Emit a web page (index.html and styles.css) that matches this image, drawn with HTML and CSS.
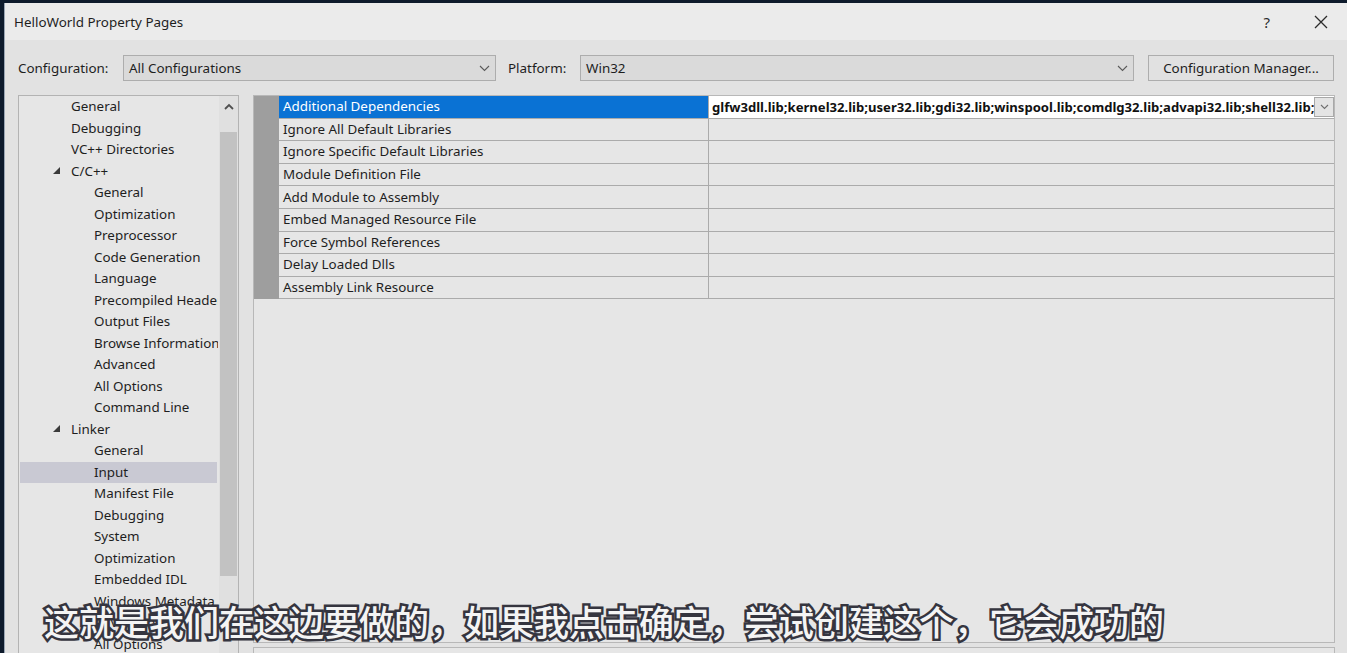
FILE: index.html
```html
<!DOCTYPE html>
<html>
<head>
<meta charset="utf-8">
<link rel="stylesheet" href="styles.css">
</head>
<body>
<div class="screen">
  <div class="window">
    <div class="titlebar">
      <span class="title">HelloWorld Property Pages</span>
      <div class="tb-buttons">
        <span class="help">?</span>
        <svg class="close" width="14" height="14" viewBox="0 0 14 14"><path d="M1 1L13 13M13 1L1 13" stroke="#2b2b2b" stroke-width="1.3" fill="none"/></svg>
      </div>
    </div>
    <div class="content">
      <div class="config-row">
        <span class="lbl lbl-config">Configuration:</span>
        <div class="combo combo-config"><span class="combo-text">All Configurations</span><svg class="chev" width="11" height="7" viewBox="0 0 11 7"><path d="M1 1L5.5 5.5L10 1" stroke="#5a5a5a" stroke-width="1.1" fill="none"/></svg></div>
        <span class="lbl lbl-platform">Platform:</span>
        <div class="combo combo-platform"><span class="combo-text">Win32</span><svg class="chev" width="11" height="7" viewBox="0 0 11 7"><path d="M1 1L5.5 5.5L10 1" stroke="#5a5a5a" stroke-width="1.1" fill="none"/></svg></div>
        <div class="btn">Configuration Manager...</div>
      </div>
      <div class="main">
        <div class="tree">
          <div class="tree-list">
            <div class="item l1"><span class="twisty"></span>General</div>
            <div class="item l1"><span class="twisty"></span>Debugging</div>
            <div class="item l1"><span class="twisty"></span>VC++ Directories</div>
            <div class="item l1"><span class="twisty"><svg width="7" height="7" viewBox="0 0 7 7"><path d="M7 0L7 7L0 7Z" fill="#3a3a3a"/></svg></span>C/C++</div>
            <div class="item l2">General</div>
            <div class="item l2">Optimization</div>
            <div class="item l2">Preprocessor</div>
            <div class="item l2">Code Generation</div>
            <div class="item l2">Language</div>
            <div class="item l2">Precompiled Headers</div>
            <div class="item l2">Output Files</div>
            <div class="item l2">Browse Information</div>
            <div class="item l2">Advanced</div>
            <div class="item l2">All Options</div>
            <div class="item l2">Command Line</div>
            <div class="item l1"><span class="twisty"><svg width="7" height="7" viewBox="0 0 7 7"><path d="M7 0L7 7L0 7Z" fill="#3a3a3a"/></svg></span>Linker</div>
            <div class="item l2">General</div>
            <div class="item l2 selected">Input</div>
            <div class="item l2">Manifest File</div>
            <div class="item l2">Debugging</div>
            <div class="item l2">System</div>
            <div class="item l2">Optimization</div>
            <div class="item l2">Embedded IDL</div>
            <div class="item l2">Windows Metadata</div>
            <div class="item l2">Advanced</div>
            <div class="item l2">All Options</div>
          </div>
          <div class="scrollbar">
            <div class="sb-up"><svg width="10" height="7" viewBox="0 0 10 7"><path d="M1 6L5 2L9 6" stroke="#505050" stroke-width="1.8" fill="none"/></svg></div>
            <div class="sb-thumb"></div>
          </div>
        </div>
        <div class="right">
          <div class="grid-panel">
            <div class="grid">
              <div class="gutter"></div>
              <div class="rows">
                <div class="row selected"><div class="name">Additional Dependencies</div><div class="value"><span class="value-text">glfw3dll.lib;kernel32.lib;user32.lib;gdi32.lib;winspool.lib;comdlg32.lib;advapi32.lib;shell32.lib;ole32.lib;oleaut32.lib;uuid.lib;odbc32.lib;odbccp32.lib;%(AdditionalDependencies)</span><div class="dd"><svg width="9" height="6" viewBox="0 0 9 6"><path d="M1 1L4.5 4.5L8 1" stroke="#707070" stroke-width="1.1" fill="none"/></svg></div></div></div>
                <div class="row"><div class="name">Ignore All Default Libraries</div><div class="value"></div></div>
                <div class="row"><div class="name">Ignore Specific Default Libraries</div><div class="value"></div></div>
                <div class="row"><div class="name">Module Definition File</div><div class="value"></div></div>
                <div class="row"><div class="name">Add Module to Assembly</div><div class="value"></div></div>
                <div class="row"><div class="name">Embed Managed Resource File</div><div class="value"></div></div>
                <div class="row"><div class="name">Force Symbol References</div><div class="value"></div></div>
                <div class="row"><div class="name">Delay Loaded Dlls</div><div class="value"></div></div>
                <div class="row"><div class="name">Assembly Link Resource</div><div class="value"></div></div>
              </div>
            </div>
          </div>
          <div class="desc-panel"></div>
        </div>
      </div>
    </div>
  </div>
  <div class="subtitle">这就是我们在这边要做的，如果我点击确定，尝试创建这个，它会成功的</div>
</div>
</body>
</html>
```
FILE: styles.css
```css
* { box-sizing: border-box; }
html, body { margin: 0; padding: 0; }
body {
  background: #0e1b2c;
  width: 1347px;
  height: 653px;
  overflow: hidden;
  font-family: "Noto Sans", "Open Sans", sans-serif;
  font-size: 13.4px;
  color: #1e1e1e;
}
.screen { position: relative; width: 1347px; height: 653px; overflow: hidden; }
.window {
  margin: 3px 0 0 4px;
  height: 650px;
  background: #e2e2e2;
  border-left: 1px solid #9aa6b4;
}
.titlebar {
  height: 37px;
  background: #ebebeb;
  display: flex;
  align-items: center;
  padding-left: 9px;
}
.title { flex: 1; }
.tb-buttons { display: flex; align-items: center; }
.help { font-size: 15px; color: #2b2b2b; margin-right: 44px; }
.close { margin-right: 19px; }
.content { padding: 15px 12px 0 13px; }
.config-row { display: flex; align-items: center; height: 26px; }
.lbl { white-space: nowrap; }
.lbl-config { width: 105px; }
.lbl-platform { width: 72px; margin-left: 12px; }
.combo {
  height: 26px;
  background: #dadada;
  border: 1px solid #adadad;
  display: flex;
  align-items: center;
  padding: 0 5px;
}
.combo-text { flex: 1; }
.combo-config { width: 373px; }
.combo-platform { width: 554px; }
.btn {
  margin-left: 14px;
  width: 186px;
  height: 26px;
  border: 1px solid #adadad;
  background: #e1e1e1;
  display: flex;
  align-items: center;
  justify-content: center;
}
.main { display: flex; margin-top: 14px; gap: 14px; }
.tree {
  width: 221px;
  flex: none;
  height: 580px;
  border: 1px solid #b3b3b3;
  background: #e6e6e6;
  display: flex;
}
.tree-list { flex: 1; overflow: hidden; min-width: 0; }
.item {
  height: 21.5px;
  line-height: 21.5px;
  white-space: nowrap;
  overflow: hidden;
  display: flex;
  align-items: center;
  margin: 0 1px 0 1px;
}
.item.l1 { padding-left: 33px; }
.item.l2 { padding-left: 74px; }
.twisty { width: 18px; flex: none; display: flex; align-items: center; padding-bottom: 2px; }
.item.selected { background: #c9c9d3; margin-right: 2px; }
.scrollbar {
  width: 19px;
  flex: none;
  background: #e0e0e0;
  display: flex;
  flex-direction: column;
  align-items: center;
}
.sb-up { height: 36px; display: flex; align-items: flex-start; padding-top: 7px; }
.sb-thumb { width: 17px; height: 444px; background: #c2c2c2; }
.right { flex: 1; min-width: 0; display: flex; flex-direction: column; gap: 4px; }
.grid-panel {
  height: 548px;
  border: 1px solid #b8b8b8;
  background: #e6e6e6;
  overflow: hidden;
}
.grid { display: flex; }
.gutter { width: 25px; flex: none; background: #9e9e9e; }
.rows { flex: 1; min-width: 0; }
.row {
  display: flex;
  height: 22.6px;
  border-bottom: 1px solid #ababab;
}
.name {
  width: 430px;
  flex: none;
  padding-left: 4px;
  padding-bottom: 1px;
  border-right: 1px solid #ababab;
  display: flex;
  align-items: center;
  white-space: nowrap;
}
.value {
  flex: 1;
  min-width: 0;
  display: flex;
  align-items: center;
}
.row.selected .name { background: #0a72d4; color: #ffffff; }
.row.selected .value { background: #ffffff; padding-left: 3px; }
.value-text {
  flex: 1;
  min-width: 0;
  overflow: hidden;
  white-space: nowrap;
  font-weight: 700;
  font-size: 13.1px;
  color: #111;
}
.dd {
  width: 20px;
  height: 20px;
  flex: none;
  background: #e4e4e4;
  border: 1px solid #a8a8a8;
  display: flex;
  align-items: center;
  justify-content: center;
}
.desc-panel {
  height: 40px;
  border: 1px solid #b8b8b8;
  background: #e6e6e6;
}
.subtitle {
  position: absolute;
  left: 44px;
  top: 603px;
  font-family: "Noto Sans CJK SC", sans-serif;
  font-size: 35px;
  line-height: 1;
  font-weight: 500;
  color: #f4f4f4;
  -webkit-text-stroke: 5px #35353f;
  paint-order: stroke fill;
  white-space: nowrap;
}
```
